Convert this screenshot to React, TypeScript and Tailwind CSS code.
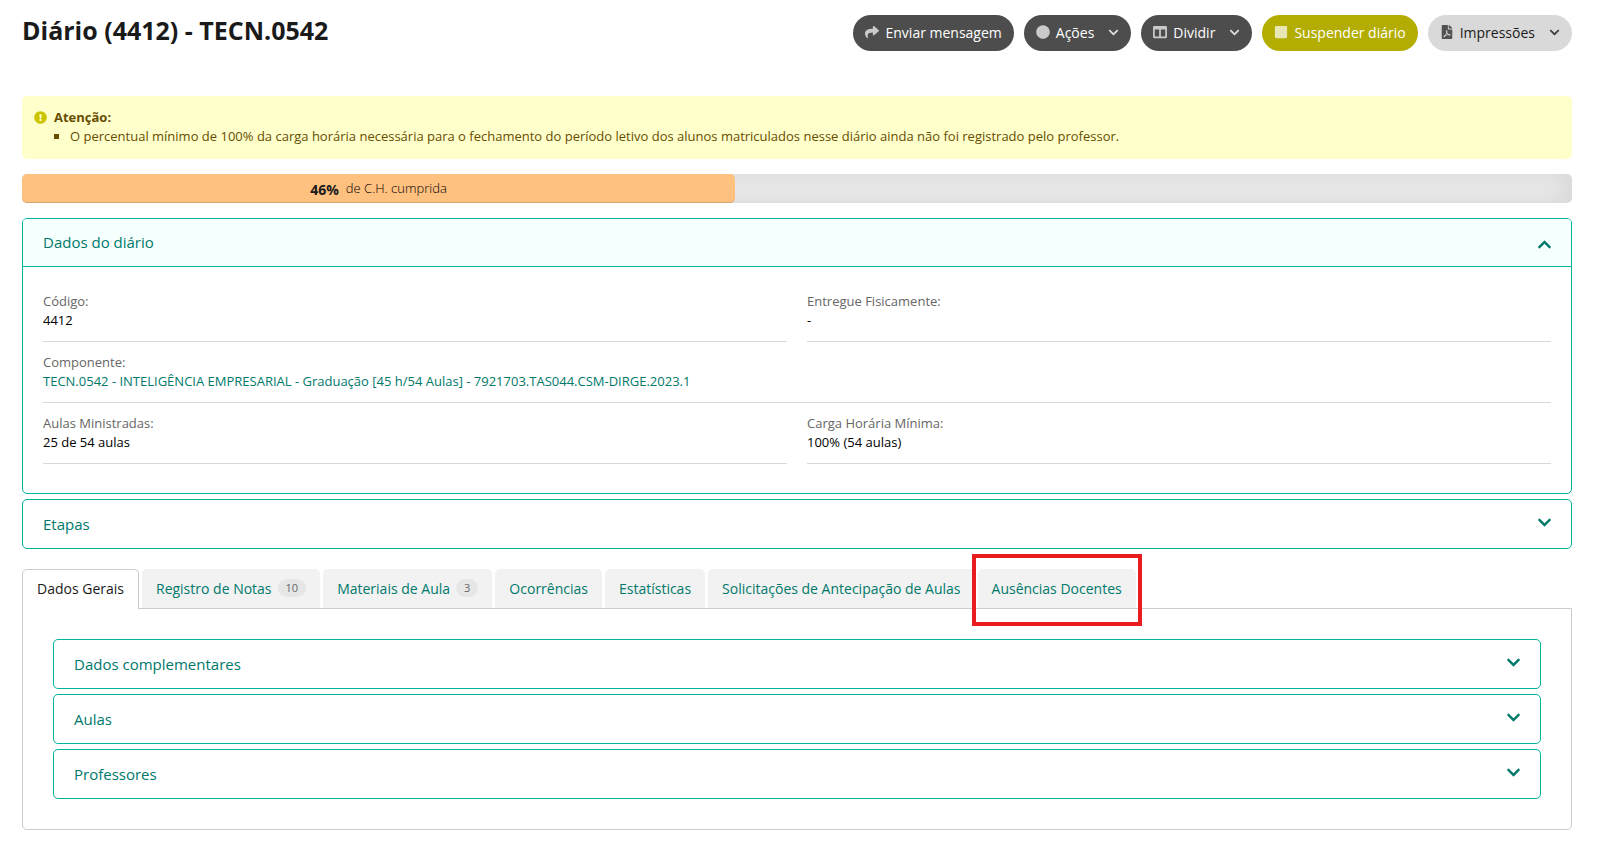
import { useState } from "react";
import type { ReactNode } from "react";
import {
  FaChevronDown,
  FaChevronUp,
  FaCircle,
  FaColumns,
  FaExclamationCircle,
  FaFilePdf,
  FaShare,
  FaSquare,
} from "react-icons/fa";

type ActionProps = {
  icon: ReactNode;
  label: string;
  menu?: boolean;
  tone?: "dark" | "warning" | "light";
};

const tones = {
  dark: "bg-[#4d4d4d] text-white",
  warning: "bg-[#b2ad00] text-white",
  light: "bg-[#d9d9d9] text-[#1a1a1a]",
};

function Action({ icon, label, menu = false, tone = "dark" }: ActionProps) {
  return (
    <button
      type="button"
      aria-haspopup={menu ? "menu" : undefined}
      className={`flex h-9 items-center rounded-full px-3 pb-[2px] text-[14px] ${tones[tone]}`}
    >
      <span className="mr-[6px] text-[14px] opacity-70">{icon}</span>
      {label}
      {menu && <FaChevronDown className="ml-[14px] text-[11px] opacity-80" />}
    </button>
  );
}

function Panel({ title, initiallyOpen = false, children }: { title: string; initiallyOpen?: boolean; children?: ReactNode }) {
  const [open, setOpen] = useState(initiallyOpen);
  return (
    <section className="overflow-hidden rounded-[5px] border border-[#00b59c]">
      <h2>
        <button
          type="button"
          aria-expanded={open}
          onClick={() => setOpen(!open)}
          className={`flex h-12 w-full items-center justify-between px-5 text-left text-[15px] text-[#00796b] ${
            open ? "border-b border-[#00b59c] bg-[#f5fffe]" : ""
          }`}
        >
          {title}
          {open ? (
            <FaChevronUp className="mt-1 -mr-px text-[15px]" />
          ) : (
            <FaChevronDown className="mb-1 -mr-px text-[15px]" />
          )}
        </button>
      </h2>
      {open && children}
    </section>
  );
}

function Field({ label, wide = false, children }: { label: string; wide?: boolean; children: ReactNode }) {
  return (
    <div className={`border-b border-[#d9d9d9] py-[11px] leading-[19px] ${wide ? "col-span-2" : ""}`}>
      <dt className="text-[#666]">{label}</dt>
      <dd className="text-black">{children}</dd>
    </div>
  );
}

const tabs: { label: string; count?: number; marked?: boolean }[] = [
  { label: "Dados Gerais" },
  { label: "Registro de Notas", count: 10 },
  { label: "Materiais de Aula", count: 3 },
  { label: "Ocorrências" },
  { label: "Estatísticas" },
  { label: "Solicitações de Antecipação de Aulas" },
  { label: "Ausências Docentes", marked: true },
];

export default function App() {
  const [active, setActive] = useState(0);
  const progress = 46;

  return (
    <main className="bg-white pr-[34px] pb-9 pl-[22px] font-['Open_Sans','Noto_Sans',sans-serif] text-[13px] text-[#1a1a1a]">
      <header className="flex items-start justify-between pt-[15px]">
        <h1 className="text-[25px] leading-[30px] font-bold">Diário (4412) - TECN.0542</h1>
        <div className="flex gap-[10px]">
          <Action icon={<FaShare />} label="Enviar mensagem" />
          <Action icon={<FaCircle />} label="Ações" menu />
          <Action icon={<FaColumns />} label="Dividir" menu />
          <Action icon={<FaSquare />} label="Suspender diário" tone="warning" />
          <Action icon={<FaFilePdf />} label="Impressões" menu tone="light" />
        </div>
      </header>

      <div role="alert" className="mt-[45px] flex gap-[7px] rounded-[5px] bg-[#ffffcc] px-3 pt-3 pb-[13px] leading-[19px] text-[#664d00]">
        <FaExclamationCircle className="mt-[3px] text-[13px] text-[#ccc400]" />
        <div>
          <strong>Atenção:</strong>
          <ul>
            <li className="flex items-center gap-[11px]">
              <span className="size-[5px] bg-[#664d00]" />
              O percentual mínimo de 100% da carga horária necessária para o fechamento do período letivo dos alunos matriculados nesse diário ainda não foi registrado pelo professor.
            </li>
          </ul>
        </div>
      </div>

      <div
        role="progressbar"
        aria-label="Carga horária cumprida"
        aria-valuenow={progress}
        aria-valuemin={0}
        aria-valuemax={100}
        className="mt-[15px] h-[29px] rounded-[5px] bg-[#e8e8e8] shadow-[inset_-8px_0_20px_rgba(0,0,0,0.07)]"
      >
        <div
          className="flex h-full items-center justify-center gap-[7px] rounded-[5px] border-b border-[#d9a36c] bg-[#ffc180] pt-[2px] font-light text-black"
          style={{ width: `${progress}%` }}
        >
          <strong className="text-[14px] font-bold text-[#1a1a1a]">{progress}%</strong>
          <span>de C.H. cumprida</span>
        </div>
      </div>

      <div className="mt-[15px] flex flex-col gap-[5px]">
        <Panel title="Dados do diário" initiallyOpen>
          <dl className="grid grid-cols-2 gap-x-5 px-5 pt-[14px] pb-[29px]">
            <Field label="Código:">4412</Field>
            <Field label="Entregue Fisicamente:">-</Field>
            <Field label="Componente:" wide>
              <a href="#componente" className="text-[#00796b]">
                TECN.0542 - INTELIGÊNCIA EMPRESARIAL - Graduação [45 h/54 Aulas] - 7921703.TAS044.CSM-DIRGE.2023.1
              </a>
            </Field>
            <Field label="Aulas Ministradas:">25 de 54 aulas</Field>
            <Field label="Carga Horária Mínima:">100% (54 aulas)</Field>
          </dl>
        </Panel>
        <Panel title="Etapas" />
      </div>

      <div role="tablist" className="mt-5 flex gap-[3px]">
        {tabs.map((tab, i) => (
          <button
            key={tab.label}
            type="button"
            role="tab"
            id={`tab-${i}`}
            aria-controls="tab-panel"
            aria-selected={i === active}
            onClick={() => setActive(i)}
            className={`relative flex items-center rounded-t-[5px] text-[14px] ${
              i === active
                ? "-mb-px h-10 border border-b-0 border-[#ccc] bg-white px-[14px] pb-[3px] text-[#1a1a1a]"
                : "h-[39px] bg-[#f2f2f2] px-[14px] pb-px text-[#00796b]"
            }`}
          >
            {tab.label}
            {tab.count !== undefined && (
              <span className="ml-[6px] rounded-full bg-[#e6e6e6] px-2 text-[11px] leading-[18px] text-[#666]">
                {tab.count}
              </span>
            )}
            {tab.marked && (
              <span className="pointer-events-none absolute -inset-x-[6px] -top-[15px] -bottom-[18px] border-4 border-[#eb1c1f]" />
            )}
          </button>
        ))}
      </div>
      <div
        role="tabpanel"
        id="tab-panel"
        aria-labelledby={`tab-${active}`}
        className="flex flex-col gap-[5px] rounded-b-[5px] border border-[#ccc] p-[30px]"
      >
        <Panel title="Dados complementares" />
        <Panel title="Aulas" />
        <Panel title="Professores" />
      </div>
    </main>
  );
}
